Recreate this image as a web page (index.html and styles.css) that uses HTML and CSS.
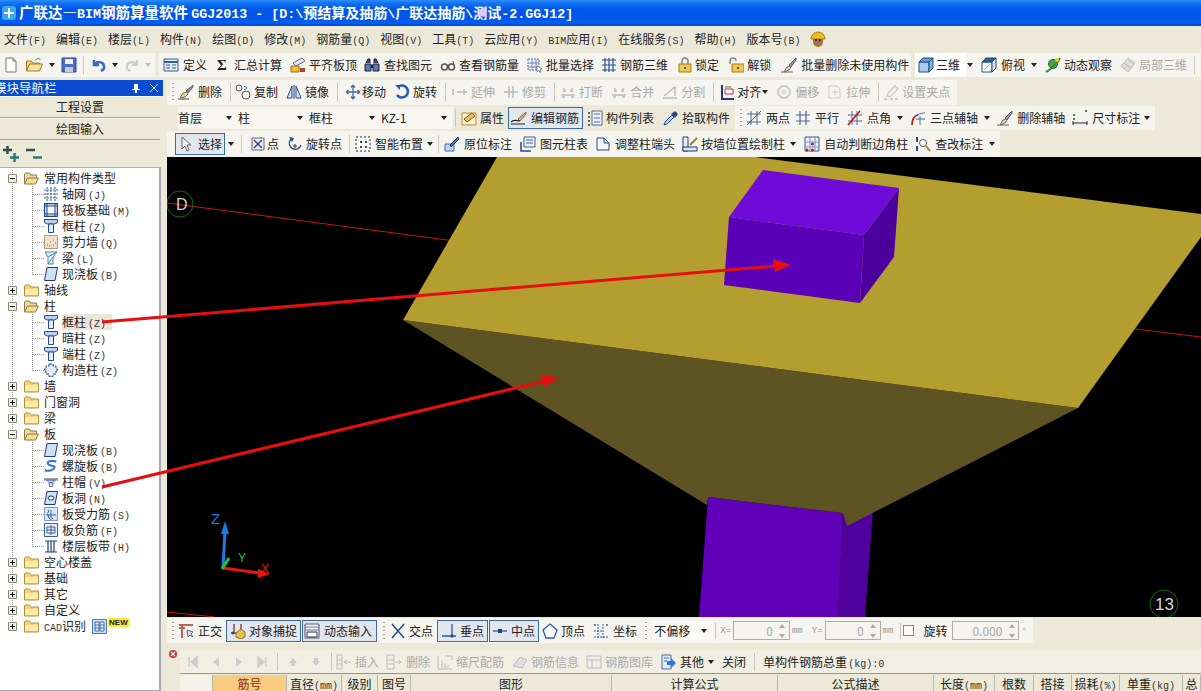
FILE: index.html
```html
<!DOCTYPE html>
<html lang="zh">
<head>
<meta charset="utf-8">
<title>广联达—BIM钢筋算量软件 GGJ2013</title>
<link rel="stylesheet" href="styles.css">
</head>
<body>
<svg class="defs" aria-hidden="true">
  <symbol id="doc" viewBox="0 0 16 16"><path d="M3 1h7l3 3v11H3z" fill="#fff" stroke="#777"/><path d="M10 1v3h3" fill="#ddd" stroke="#777"/></symbol>
  <symbol id="open" viewBox="0 0 18 16"><path d="M1 14V4h5l1 2h7v2" fill="#f3d27a" stroke="#a07a20"/><path d="M1 14l3-7h13l-3 7z" fill="#f7e3a0" stroke="#a07a20"/><path d="M10 3l3-2 2 2" fill="none" stroke="#3a9a3a"/></symbol>
  <symbol id="save" viewBox="0 0 16 16"><path d="M1 1h14v14H1z" fill="#4a6fc0" stroke="#2a4a90"/><path d="M4 2h8v5H4z" fill="#eef"/><path d="M4 10h8v5H4z" fill="#c8c8d0"/></symbol>
  <symbol id="undo" viewBox="0 0 16 16"><path d="M3 3v5h5M3.500 8C6 4 12 4 13 9c.5 2-1 4-3 5" fill="none" stroke="#3a66c8" stroke-width="2.500"/></symbol>
  <symbol id="redo" viewBox="0 0 16 16"><path d="M13 3v5H8M12.500 8C10 4 4 4 3 9c-.5 2 1 4 3 5" fill="none" stroke="#ccc" stroke-width="2.200"/></symbol>
  <symbol id="def" viewBox="0 0 16 16"><path d="M1 2h14v12H1z" fill="#e4ebf6" stroke="#3c5a90"/><path d="M1 5h14" stroke="#3c5a90" stroke-width="2"/><path d="M3 8h4M3 11h4M9 8h4M9 11h4" stroke="#3c5a90"/></symbol>
  <symbol id="align" viewBox="0 0 16 16"><path d="M3 6l9-5 3 3-9 5z" fill="#dfe6f0" stroke="#667"/><path d="M1 9h8v6H1z" fill="#f2c230" stroke="#96702a"/><path d="M10 11h5v4h-5z" fill="#a84a20"/></symbol>
  <symbol id="bino" viewBox="0 0 16 16"><path d="M2 6l2-4h2v4M14 6l-2-4h-2v4" fill="#446" stroke="#224"/><path d="M1 7h6v7H1zM9 7h6v7H9z" fill="#5a7ab0" stroke="#224"/><path d="M7 8h2v3H7z" fill="#224"/></symbol>
  <symbol id="glass" viewBox="0 0 16 16"><circle cx="4.500" cy="10" r="3" fill="none" stroke="#555" stroke-width="1.500"/><circle cx="11.500" cy="10" r="3" fill="none" stroke="#555" stroke-width="1.500"/><path d="M7 9h2M14 9l-1-5" stroke="#555"/></symbol>
  <symbol id="batch" viewBox="0 0 16 16"><path d="M1 2h11v11H1z" fill="none" stroke="#5a7ab0" stroke-dasharray="2 1"/><path d="M1 6h11M1 10h11M5 2v11M9 2v11" stroke="#6a8ac0"/><path d="M10 9l5 3-2 1 1 2-1 .5-1-2-2 1z" fill="#fff" stroke="#444" stroke-width=".6"/></symbol>
  <symbol id="grid3" viewBox="0 0 16 16"><path d="M1 3h14M1 8h14M1 13h14M4 1v14M8 1v14M12 1v14" stroke="#2c4f98" stroke-width="1.200"/></symbol>
  <symbol id="lock" viewBox="0 0 16 16"><path d="M5 7V4a3 3 0 0 1 6 0v3" fill="none" stroke="#888" stroke-width="1.500"/><path d="M2 7h12v8H2z" fill="#f0c850" stroke="#a07c20"/><path d="M8 10v2" stroke="#644" stroke-width="2"/></symbol>
  <symbol id="unlock" viewBox="0 0 16 16"><path d="M2 7V4a3 3 0 0 1 6 0" fill="none" stroke="#888" stroke-width="1.500"/><path d="M4 7h12v8H4z" fill="#f0c850" stroke="#a07c20"/><path d="M10 10v2" stroke="#644" stroke-width="2"/></symbol>
  <symbol id="brush" viewBox="0 0 16 16"><path d="M15 1L8 8l2 2 5-7z" fill="#8a9ad0" stroke="#556"/><path d="M9 9l-3 1-3 5 5-2 2-3z" fill="#dcd0a8" stroke="#776"/><path d="M0 15h12" stroke="#666"/></symbol>
  <symbol id="cube" viewBox="0 0 16 16"><path d="M1 5h10v10H1z" fill="#a8cdf0" stroke="#1f4f80"/><path d="M1 5l4-4h10l-4 4z" fill="#6f9fd0" stroke="#1f4f80"/><path d="M11 5l4-4v10l-4 4z" fill="#7fb0de" stroke="#1f4f80"/></symbol>
  <symbol id="cube2" viewBox="0 0 16 16"><path d="M1 5h10v10H1z" fill="#fff" stroke="#1f4f80"/><path d="M1 5l4-4h10l-4 4z" fill="#2f5f90" stroke="#1f4f80"/><path d="M11 5l4-4v10l-4 4z" fill="#d8e6f4" stroke="#1f4f80"/><path d="M3 13l6-6" stroke="#9ac"/></symbol>
  <symbol id="orbit" viewBox="0 0 16 16"><circle cx="8" cy="7" r="4.500" fill="#4aa04a" stroke="#2a6a2a"/><path d="M1 15C5 13 12 7 15 1" fill="none" stroke="#3a8a3a" stroke-width="2"/><circle cx="12" cy="3" r="2" fill="#e6d020"/></symbol>
  <symbol id="local3" viewBox="0 0 16 16"><path d="M8 1l7 5-7 9-7-6z" fill="#ddd" stroke="#bbb"/><path d="M4 6l7 5M8 3l5 4" stroke="#bbb"/></symbol>
  <symbol id="del" viewBox="0 0 16 16"><path d="M15 1L8 7l2 2 5-6z" fill="#9878c0" stroke="#665"/><path d="M9 8L5 9l-3 5 5-1 3-3z" fill="#e4d4a0" stroke="#775"/><path d="M0 15h11" stroke="#444"/></symbol>
  <symbol id="copy" viewBox="0 0 16 16"><circle cx="4" cy="4" r="3" fill="none" stroke="#556"/><circle cx="11" cy="11" r="4" fill="none" stroke="#556"/><path d="M9 2l3 2-3 2" fill="none" stroke="#3a7ac0"/></symbol>
  <symbol id="mirror" viewBox="0 0 16 16"><path d="M6 2v12H1zM10 2v12h5z" fill="#dde6f2" stroke="#2a4a80"/><path d="M8 1v14" stroke="#2a4a80"/></symbol>
  <symbol id="move" viewBox="0 0 16 16"><path d="M8 1v14M1 8h14M8 1L6 3.500M8 1l2 2.500M8 15l-2-2.500M8 15l2-2.500M1 8l2.500-2M1 8l2.500 2M15 8l-2.500-2M15 8l-2.500 2" fill="none" stroke="#4a6aa0" stroke-width="1.300"/></symbol>
  <symbol id="rot" viewBox="0 0 16 16"><path d="M4 3A6 6 0 1 1 3 11" fill="none" stroke="#2a5ab0" stroke-width="2.500"/><path d="M1 1h5v5z" fill="#2a5ab0"/></symbol>
  <symbol id="dim1" viewBox="0 0 16 16"><path d="M1 5v6M5 8h10M12 5v6" stroke="#bbb" stroke-width="1.500"/></symbol>
  <symbol id="dim2" viewBox="0 0 16 16"><path d="M6 2v12M10 2v12M1 8h14" stroke="#bbb" stroke-width="1.500"/></symbol>
  <symbol id="dim3" viewBox="0 0 16 16"><path d="M1 11h14M3 7h3M10 7h3M4 4v3M12 4v3M2 13h3M11 13h3" stroke="#bbb" stroke-width="1.500"/></symbol>
  <symbol id="dim4" viewBox="0 0 16 16"><path d="M1 14h14M2 12L13 3M13 3v9" fill="none" stroke="#bbb" stroke-width="1.300"/><path d="M10 4l3-2 1 3z" fill="#bbb"/></symbol>
  <symbol id="ali" viewBox="0 0 16 16"><path d="M2 1v14h12" fill="none" stroke="#1f3a80" stroke-width="2"/><path d="M5 5h8v5H5z" fill="#fff" stroke="#c03030"/><path d="M5 3h6" stroke="#209030"/></symbol>
  <symbol id="offs" viewBox="0 0 16 16"><circle cx="8" cy="8" r="6" fill="none" stroke="#ccc" stroke-width="2"/><circle cx="8" cy="8" r="2.500" fill="#ddd"/></symbol>
  <symbol id="strt" viewBox="0 0 16 16"><path d="M2 2h8l3 3v9H2z" fill="none" stroke="#ccc"/><path d="M5 8h6M8 5v6" stroke="#ccc"/></symbol>
  <symbol id="grip" viewBox="0 0 16 16"><path d="M12 2l3 3-8 8-3-1 1-3z" fill="none" stroke="#ccc" stroke-width="1.400"/><path d="M1 15h3M7 15h3M12 15h3" stroke="#bbb" stroke-width="1.400"/></symbol>
  <symbol id="prop" viewBox="0 0 16 16"><path d="M1 3h14v12H1z" fill="#fbefd8" stroke="#c08a40"/><path d="M3 9l8-6 3 3-8 6z" fill="#e8c060" stroke="#906020"/></symbol>
  <symbol id="edit" viewBox="0 0 16 16"><path d="M15 2L7 9l2 2 6-7z" fill="#d8b060" stroke="#775"/><path d="M0 12c4-3 6-1 9-1M0 14h14" fill="none" stroke="#222" stroke-width="1.200"/></symbol>
  <symbol id="list" viewBox="0 0 16 16"><path d="M5 1h10v14H5z" fill="#eef2fa" stroke="#556a90"/><path d="M7 4h6M7 8h6M7 12h6" stroke="#556a90"/><path d="M1 3h2M1 7h2M1 11h2M1 15h2" stroke="#333" stroke-width="1.500"/></symbol>
  <symbol id="pick" viewBox="0 0 16 16"><path d="M1 15l1-3 7-7 2 2-7 7z" fill="#bcd4f4" stroke="#2a4a90"/><path d="M8 4l4-3 3 3-3 4z" fill="#2a4a90"/></symbol>
  <symbol id="p2" viewBox="0 0 16 16"><path d="M1 4h14M1 12h14M5 1v14M11 1v14" stroke="#4a6aa0"/><path d="M1 15L15 1" stroke="#c03030"/></symbol>
  <symbol id="par" viewBox="0 0 16 16"><path d="M1 5h14M1 11h14M5 1v14M11 1v14" stroke="#4a6aa0" stroke-width="1.200"/></symbol>
  <symbol id="ang" viewBox="0 0 16 16"><path d="M1 5h14M1 11h14M5 1v14M10 1v14" stroke="#4a6aa0"/><path d="M1 15L13 1" stroke="#c81010" stroke-width="1.500"/></symbol>
  <symbol id="arc3" viewBox="0 0 16 16"><path d="M2 15C2 7 7 3 15 3M6 9h9M10 6v9" fill="none" stroke="#4a6aa0"/><path d="M2 15C2 9 4 6 8 5" fill="none" stroke="#c81010" stroke-width="1.500"/></symbol>
  <symbol id="size" viewBox="0 0 16 16"><path d="M1 11v4M15 11v4M1 13h14" stroke="#222"/><path d="M1 5h2M1 9h2M13 1h2" stroke="#2a9a2a" stroke-width="2"/></symbol>
  <symbol id="cur" viewBox="0 0 16 16"><path d="M1 1v12l3-3 2 5 2-1-2-5h4z" fill="#f4f4f4" stroke="#666"/></symbol>
  <symbol id="pt" viewBox="0 0 16 16"><path d="M2 2h12v12H2z" fill="#eef" stroke="#667"/><path d="M4 4l8 8M12 4l-8 8" stroke="#2a3a70" stroke-width="1.300"/></symbol>
  <symbol id="rotp" viewBox="0 0 16 16"><path d="M4 3A6 6 0 1 0 14 9" fill="none" stroke="#2a4a80" stroke-width="1.300"/><path d="M2 1l5 1-2 4z" fill="#2a4a80"/><path d="M8 8v4M6 10h4" stroke="#333"/></symbol>
  <symbol id="smart" viewBox="0 0 16 16"><path d="M1 1h14v14H1z" fill="#fff" stroke="#222" stroke-dasharray="2 2"/><path d="M5 5h2v2H5zM10 5h2v2h-2zM5 10h2v2H5zM10 10h2v2h-2z" fill="#2a4a80"/></symbol>
  <symbol id="orig" viewBox="0 0 16 16"><path d="M1 8h9v7H1z" fill="#c4d4ee" stroke="#4a6aa0"/><path d="M14 1L6 9l1 2 8-8z" fill="#3a6ac0" stroke="#1f3a80"/></symbol>
  <symbol id="ctbl" viewBox="0 0 16 16"><path d="M4 1h11v10H4z" fill="#eef2fa" stroke="#3a5a90"/><path d="M6 4h7M6 7h7" stroke="#3a5a90"/><path d="M1 6v9h10" fill="none" stroke="#2a4a90" stroke-width="1.500"/></symbol>
  <symbol id="end" viewBox="0 0 16 16"><path d="M2 2h7l5 5v7H2z" fill="#f2f4fa" stroke="#2a4a80"/><path d="M9 2v5h5" fill="none" stroke="#2a4a80"/></symbol>
  <symbol id="wall" viewBox="0 0 16 16"><path d="M1 1h5v14H1z" fill="#e8f0fa" stroke="#1f3a80"/><path d="M1 11h14v4H1z" fill="#dbe5f4" stroke="#1f3a80"/><path d="M8 9l7-7" stroke="#a08030" stroke-width="2"/></symbol>
  <symbol id="corner" viewBox="0 0 16 16"><path d="M1 1h14v14H1z" fill="#eaf0fa" stroke="#3a5a90"/><path d="M1 6h14M1 11h14M6 1v14M11 1v14" stroke="#7a94c0"/><circle cx="8.500" cy="8" r="1.500" fill="#c01818"/><circle cx="3" cy="14" r="1.500" fill="#c01818"/><circle cx="8.500" cy="14" r="1.500" fill="#c01818"/></symbol>
  <symbol id="chg" viewBox="0 0 16 16"><path d="M2 1v5M2 10v5" stroke="#2a4a90" stroke-width="2"/><circle cx="8" cy="7" r="3.500" fill="#fff" stroke="#555"/><path d="M11 10l4 5" stroke="#a88030" stroke-width="2"/></symbol>
  <symbol id="ortho" viewBox="0 0 16 16"><path d="M1 2h14M4 2v13M1 5h6" stroke="#c06050" stroke-width="2"/><path d="M9 7l1 7 2-2 3 2-2-3 2-2z" fill="#ddd" stroke="#667"/></symbol>
  <symbol id="osnap" viewBox="0 0 16 16"><path d="M1 10h7M4 1v8M11 1v6" stroke="#8a3020" stroke-width="1.300"/><circle cx="3" cy="10" r="1.500" fill="#2a4a90"/><path d="M6 10l5-4 4 3v5l-4 2-5-2z" fill="#e8c050" stroke="#907020"/></symbol>
  <symbol id="dyn" viewBox="0 0 16 16"><path d="M1 1h14v14H1z" fill="#eef2fa" stroke="#556"/><path d="M1 4h14M1 7h14" stroke="#779"/><path d="M3 9h10v5H3z" fill="#fff" stroke="#335"/></symbol>
  <symbol id="cross" viewBox="0 0 16 16"><path d="M2 1l12 14M14 1L2 15" stroke="#2a4a90" stroke-width="1.500"/></symbol>
  <symbol id="perp" viewBox="0 0 16 16"><path d="M11 1v11M1 13h14" stroke="#2a5ab0" stroke-width="1.300"/><circle cx="11" cy="13" r="1.500" fill="#1f3a80"/></symbol>
  <symbol id="midp" viewBox="0 0 16 16"><path d="M1 8h14" stroke="#2a5ab0" stroke-width="1.300"/><path d="M6 6h4v4H6z" fill="#1f3a80"/></symbol>
  <symbol id="vert" viewBox="0 0 16 16"><path d="M8 1l7 6-3 8H4L1 7z" fill="#fff" stroke="#2a5ab0" stroke-width="1.300"/></symbol>
  <symbol id="coord" viewBox="0 0 16 16"><path d="M1 8h9M5 1v14M10 1v14M1 14h14" stroke="#2a5ab0" stroke-dasharray="2 1"/><circle cx="2" cy="2" r="1" fill="#2a7a2a"/><circle cx="14" cy="2" r="1" fill="#2a7a2a"/></symbol>
  <symbol id="close" viewBox="0 0 8 8"><circle cx="4" cy="4" r="4" fill="#cc3030"/><path d="M2 2l4 4M6 2L2 6" stroke="#fff" stroke-width="1.300"/></symbol>
  <symbol id="first" viewBox="0 0 12 12"><path d="M2 1v10M10 1v10L4 6z" fill="#ccc" stroke="#ccc" stroke-width="1.500"/></symbol>
  <symbol id="prev" viewBox="0 0 12 12"><path d="M9 1v10L3 6z" fill="#ccc"/></symbol>
  <symbol id="next" viewBox="0 0 12 12"><path d="M3 1v10l6-5z" fill="#ccc"/></symbol>
  <symbol id="last" viewBox="0 0 12 12"><path d="M10 1v10M2 1v10l6-5z" fill="#ccc" stroke="#ccc" stroke-width="1.500"/></symbol>
  <symbol id="up" viewBox="0 0 12 12"><path d="M6 2l4 5H8v3H4V7H2z" fill="#ccc"/></symbol>
  <symbol id="down" viewBox="0 0 12 12"><path d="M6 10l4-5H8V2H4v3H2z" fill="#ccc"/></symbol>
  <symbol id="ins" viewBox="0 0 16 16"><path d="M1 1h5v14H1zM1 6h5M1 10h5M15 8H8M11 6L8 8l3 2" fill="none" stroke="#bbb"/></symbol>
  <symbol id="rem" viewBox="0 0 16 16"><path d="M1 1h7v14H1zM1 6h7M1 10h7M10 8h5M13 6l2 2-2 2" fill="none" stroke="#bbb"/></symbol>
  <symbol id="scale" viewBox="0 0 16 16"><path d="M1 2v13h14M5 14V7M8 14V9M11 14v-3M8 2h7v4" fill="none" stroke="#bbb"/></symbol>
  <symbol id="info" viewBox="0 0 16 16"><path d="M1 12L8 3l7 3-5 8z" fill="#ddd" stroke="#bbb"/></symbol>
  <symbol id="lib" viewBox="0 0 16 16"><path d="M1 2h14v12H1zM1 6h14M6 6v8" fill="#eee" stroke="#bbb"/></symbol>
  <symbol id="other" viewBox="0 0 16 16"><path d="M2 1h9v14H2z" fill="#e4ecf8" stroke="#4a6aa0"/><path d="M4 4h5M4 7h3" stroke="#4a6aa0"/><path d="M7 7h4V4l5 5-5 5v-3H7z" fill="#2a7ae0"/></symbol>
  <symbol id="expand" viewBox="0 0 16 16"><path d="M0 4h9M4.500 0v8" stroke="#2f4f4f" stroke-width="2.500"/><path d="M7 11.500h9M11.500 7v9" stroke="#2a7a7a" stroke-width="2.500"/></symbol>
  <symbol id="collapse" viewBox="0 0 16 16"><path d="M0 4h9" stroke="#2f4f4f" stroke-width="2.500"/><path d="M7 11.500h9" stroke="#2a7a7a" stroke-width="2.500"/></symbol>
  <symbol id="plus" viewBox="0 0 9 9"><path d="M.5.500h8v8h-8z" fill="#f6f4ec" stroke="#8a8a80"/><path d="M2 4.500h5M4.500 2v5" stroke="#111"/></symbol>
  <symbol id="minus" viewBox="0 0 9 9"><path d="M.5.500h8v8h-8z" fill="#f6f4ec" stroke="#8a8a80"/><path d="M2 4.500h5" stroke="#111"/></symbol>
  <symbol id="fc" viewBox="0 0 15 13"><path d="M.5 12V2l1-1h4l1 2h8v9z" fill="#f6d57a" stroke="#b09040"/><path d="M1 5h13v6H1z" fill="#fbe9a8"/></symbol>
  <symbol id="fo" viewBox="0 0 15 13"><path d="M.5 12V2l1-1h4l1 2h6v3" fill="#e6d8a8" stroke="#907a40"/><path d="M.5 12l3-6h11l-3 6z" fill="#f4dc8c" stroke="#907a40"/></symbol>
  <symbol id="col" viewBox="0 0 14 14"><path d="M.5.500h13v3l-3 1.500h-7L.5 3.500z" fill="#bcd0f0" stroke="#2a4a90"/><path d="M4.500 5h5v8.500h-5z" fill="#dfe9f8" stroke="#2a4a90"/></symbol>
  <symbol id="ax" viewBox="0 0 14 14"><path d="M0 3h14M0 7h14M0 11h14M3 0v14M7 0v14M11 0v14" stroke="#3a62b0" stroke-width="1.100" stroke-dasharray="2 1"/></symbol>
  <symbol id="raft" viewBox="0 0 14 14"><path d="M.5.500h13v13H.5z" fill="#dfe8f6" stroke="#1f4a90" stroke-width="1.300"/><path d="M3 3h8v8H3zM0 3h3M11 3h3M0 11h3M11 11h3M3 0v3M11 0v3M3 11v3M11 11v3" fill="#f4f6fb" stroke="#1f4a90"/></symbol>
  <symbol id="shear" viewBox="0 0 14 14"><path d="M.5.500h13v13H.5z" fill="#f0e0cc" stroke="#b09878"/><path d="M3 10h1M6 7h1M9 10h1M5 11h1M9 5h1M11 8h1" stroke="#8a6040"/></symbol>
  <symbol id="beam" viewBox="0 0 14 14"><path d="M1 1h12L9 6v7H4V6z" fill="#eaf2fb" stroke="#4a84b8"/><path d="M4 6l9-5M4 13l5-7" stroke="#4a84b8"/></symbol>
  <symbol id="slab" viewBox="0 0 14 14"><path d="M3 .5h10.500L11 13.500H.5z" fill="#cfe0f6" stroke="#1f3a80"/></symbol>
  <symbol id="gz" viewBox="0 0 14 14"><path d="M5 1h4v2h3v3h1.500v2H12v3H9v2.500H5V11H2V8H.5V6H2V3h3z" fill="#e4ecf8" stroke="#2a4a80" stroke-dasharray="3 1"/></symbol>
  <symbol id="spiral" viewBox="0 0 16 14"><path d="M14 2C8 0 2 2 5 5s8 1 7 4-7 4-11 3" fill="none" stroke="#3a7ac8" stroke-width="2.500"/></symbol>
  <symbol id="cap" viewBox="0 0 16 14"><path d="M0 3h16v2H0z" fill="#9a9a9a" stroke="#666" stroke-width=".5"/><path d="M3 5h10l-3 3H6z" fill="#c8d4e8" stroke="#2a4a90" stroke-width=".7"/><path d="M6 8h4v4H6z" fill="#fff" stroke="#2a4a90"/></symbol>
  <symbol id="hole" viewBox="0 0 14 14"><path d="M3 .5h10.500L11 13.500H.5z" fill="#cfe0f6" stroke="#1f3a80"/><ellipse cx="7" cy="7" rx="3" ry="2" fill="#fff" stroke="#1f3a80"/></symbol>
  <symbol id="sbar" viewBox="0 0 14 14"><path d="M.5.500h13v13H.5z" fill="#dbe6f6" stroke="#7a98c8"/><path d="M2 8h10M7 3v8" stroke="#3a62a0"/><path d="M5 3a3 5 0 1 0 4 8" fill="none" stroke="#3a62a0"/></symbol>
  <symbol id="nbar" viewBox="0 0 14 14"><path d="M.5.500h13v13H.5z" fill="#e6eefa" stroke="#3a62a0"/><path d="M3 4h8v6H3zM3 7h8M7 2v10" fill="none" stroke="#3a62a0"/></symbol>
  <symbol id="band" viewBox="0 0 14 14"><path d="M1 2h12M1 13h12M4 2v11M7 2v11M10 2v11" stroke="#1f3a80" stroke-width="1.200"/></symbol>
  <symbol id="cad" viewBox="0 0 15 15"><path d="M.5.500h14v14H.5z" fill="#cfe2f8" stroke="#4a7ab0"/><path d="M3 3h4v9H3zM8 3h4v9H8zM3 6h4M8 6h4M3 9h4M8 9h4" fill="#eaf3fc" stroke="#3a68a8"/></symbol>
</svg>

<div class="app">
  <header class="title">
    <svg class="logo" viewBox="0 0 14 14"><rect width="14" height="14" rx="3" fill="#3ba8e8"/><path d="M7 2v10M2 7h10" stroke="#fff" stroke-width="2"/></svg>
    <span class="title-text">广联达—<span class="lat">BIM</span>钢筋算量软件 <span class="lat">GGJ2013 - [D:\</span><span class="tail">预结算及抽筋<span class="lat">\</span>广联达抽筋<span class="lat">\</span>测试<span class="lat">-2.GGJ12]</span></span></span>
  </header>

  <nav class="menu">
    <span>文件<b>(F)</b></span><span>编辑<b>(E)</b></span><span>楼层<b>(L)</b></span><span>构件<b>(N)</b></span><span>绘图<b>(D)</b></span><span>修改<b>(M)</b></span><span>钢筋量<b>(Q)</b></span><span>视图<b>(V)</b></span><span>工具<b>(T)</b></span><span>云应用<b>(Y)</b></span><span><b>BIM</b>应用<b>(I)</b></span><span>在线服务<b>(S)</b></span><span>帮助<b>(H)</b></span><span>版本号<b>(B)</b></span>
    <svg class="hat" viewBox="0 0 16 16"><path d="M1 8a7 7 0 0 1 14 0z" fill="#f0c020" stroke="#a07a10"/><path d="M3 8h10v3a5 5 0 0 1-10 0z" fill="#a87048"/><path d="M5 9h2M9 9h2" stroke="#222" stroke-width="1.500"/></svg>
  </nav>

  <div class="bar top-bar">
    <div class="band band-a">
      <svg class="i doc"><use href="#doc"/></svg>
      <svg class="i fold"><use href="#open"/></svg><i class="tri"></i>
      <svg class="i"><use href="#save"/></svg>
      <i class="sep"></i>
      <svg class="i"><use href="#undo"/></svg><i class="tri"></i>
      <svg class="i"><use href="#redo"/></svg><i class="tri off"></i>
    </div>
    <div class="band band-b">
      <span class="it g4 m10"><svg class="i"><use href="#def"/></svg>定义</span>
      <span class="it"><em class="sigma">Σ</em>汇总计算</span>
      <span class="it m7"><svg class="i"><use href="#align"/></svg>平齐板顶</span>
      <span class="it g4"><svg class="i"><use href="#bino"/></svg>查找图元</span>
      <span class="it"><svg class="i"><use href="#glass"/></svg>查看钢筋量</span>
      <span class="it m7"><svg class="i"><use href="#batch"/></svg>批量选择</span>
      <span class="it m9"><svg class="i"><use href="#grid3"/></svg>钢筋三维</span>
      <span class="it g2 m9"><svg class="i"><use href="#lock"/></svg>锁定</span>
      <span class="it m10"><svg class="i"><use href="#unlock"/></svg>解锁</span>
      <span class="it g4 m0"><svg class="i"><use href="#brush"/></svg>批量删除未使用构件</span>
    </div>
    <div class="band band-c">
      <span class="white"><svg class="i"><use href="#cube"/></svg>三维</span><i class="tri t-a"></i>
      <span class="it g4 m0"><svg class="i"><use href="#cube2"/></svg>俯视</span><i class="tri t-b"></i>
      <span class="it"><svg class="i"><use href="#orbit"/></svg>动态观察</span>
      <span class="it off m7"><svg class="i"><use href="#local3"/></svg>局部三维</span>
      <i class="sep"></i>
    </div>
  </div>

  <div class="main">
    <aside class="side">
      <div class="nav-head"><span>模块导航栏</span><span class="nav-btns"><svg class="pin" viewBox="0 0 10 10"><path d="M3 1h4v5h2v1H6v3H4V7H1V6h2z" fill="#fff"/></svg><svg class="x" viewBox="0 0 10 10"><path d="M1 1l8 8M9 1L1 9" stroke="#dde" /></svg></span></div>
      <button class="nav-btn">工程设置</button>
      <button class="nav-btn">绘图输入</button>
      <div class="tree-tools"><svg class="i"><use href="#expand"/></svg><svg class="i"><use href="#collapse"/></svg></div>
      <div class="tree">
        <div class="r"><svg class="ex"><use href="#minus"/></svg><svg class="fo"><use href="#fo"/></svg>常用构件类型</div>
        <div class="r c"><i class="dash"></i><svg class="ci"><use href="#ax"/></svg><span>轴网<b>(J)</b></span></div>
        <div class="r c"><i class="dash"></i><svg class="ci"><use href="#raft"/></svg><span>筏板基础<b>(M)</b></span></div>
        <div class="r c"><i class="dash"></i><svg class="ci"><use href="#col"/></svg><span>框柱<b>(Z)</b></span></div>
        <div class="r c"><i class="dash"></i><svg class="ci"><use href="#shear"/></svg><span>剪力墙<b>(Q)</b></span></div>
        <div class="r c"><i class="dash"></i><svg class="ci"><use href="#beam"/></svg><span>梁<b>(L)</b></span></div>
        <div class="r c last"><i class="dash"></i><svg class="ci"><use href="#slab"/></svg><span>现浇板<b>(B)</b></span></div>
        <div class="r"><svg class="ex"><use href="#plus"/></svg><svg class="fo"><use href="#fc"/></svg>轴线</div>
        <div class="r"><svg class="ex"><use href="#minus"/></svg><svg class="fo"><use href="#fo"/></svg>柱</div>
        <div class="r c"><i class="dash"></i><svg class="ci"><use href="#col"/></svg><span class="sel">框柱<b>(Z)</b></span></div>
        <div class="r c"><i class="dash"></i><svg class="ci"><use href="#col"/></svg><span>暗柱<b>(Z)</b></span></div>
        <div class="r c"><i class="dash"></i><svg class="ci"><use href="#col"/></svg><span>端柱<b>(Z)</b></span></div>
        <div class="r c last"><i class="dash"></i><svg class="ci"><use href="#gz"/></svg><span>构造柱<b>(Z)</b></span></div>
        <div class="r"><svg class="ex"><use href="#plus"/></svg><svg class="fo"><use href="#fc"/></svg>墙</div>
        <div class="r"><svg class="ex"><use href="#plus"/></svg><svg class="fo"><use href="#fc"/></svg>门窗洞</div>
        <div class="r"><svg class="ex"><use href="#plus"/></svg><svg class="fo"><use href="#fc"/></svg>梁</div>
        <div class="r"><svg class="ex"><use href="#minus"/></svg><svg class="fo"><use href="#fo"/></svg>板</div>
        <div class="r c"><i class="dash"></i><svg class="ci"><use href="#slab"/></svg><span>现浇板<b>(B)</b></span></div>
        <div class="r c"><i class="dash"></i><svg class="ci"><use href="#spiral"/></svg><span>螺旋板<b>(B)</b></span></div>
        <div class="r c"><i class="dash"></i><svg class="ci"><use href="#cap"/></svg><span>柱帽<b>(V)</b></span></div>
        <div class="r c"><i class="dash"></i><svg class="ci"><use href="#hole"/></svg><span>板洞<b>(N)</b></span></div>
        <div class="r c"><i class="dash"></i><svg class="ci"><use href="#sbar"/></svg><span>板受力筋<b>(S)</b></span></div>
        <div class="r c"><i class="dash"></i><svg class="ci"><use href="#nbar"/></svg><span>板负筋<b>(F)</b></span></div>
        <div class="r c last"><i class="dash"></i><svg class="ci"><use href="#band"/></svg><span>楼层板带<b>(H)</b></span></div>
        <div class="r"><svg class="ex"><use href="#plus"/></svg><svg class="fo"><use href="#fc"/></svg>空心楼盖</div>
        <div class="r"><svg class="ex"><use href="#plus"/></svg><svg class="fo"><use href="#fc"/></svg>基础</div>
        <div class="r"><svg class="ex"><use href="#plus"/></svg><svg class="fo"><use href="#fc"/></svg>其它</div>
        <div class="r"><svg class="ex"><use href="#plus"/></svg><svg class="fo"><use href="#fc"/></svg>自定义</div>
        <div class="r end"><svg class="ex"><use href="#plus"/></svg><svg class="fo"><use href="#fc"/></svg><span class="cadt"><b>CAD</b>识别</span><svg class="cad"><use href="#cad"/></svg><span class="new">NEW</span></div>
      </div>
    </aside>

    <section class="work">
      <div class="row row1">
        <div class="band">
          <i class="dots"></i>
          <span class="it g4"><svg class="i"><use href="#del"/></svg>删除</span><i class="sep s4"></i>
          <span class="it"><svg class="i"><use href="#copy"/></svg>复制</span>
          <span class="it"><svg class="i"><use href="#mirror"/></svg>镜像</span><i class="sep s7"></i>
          <span class="it g1"><svg class="i"><use href="#move"/></svg>移动</span>
          <span class="it"><svg class="i"><use href="#rot"/></svg>旋转</span><i class="sep s6"></i>
          <span class="it off"><svg class="i"><use href="#dim1"/></svg>延伸</span>
          <span class="it off"><svg class="i"><use href="#dim2"/></svg>修剪</span><i class="sep s5"></i>
          <span class="it off"><svg class="i"><use href="#dim3"/></svg>打断</span>
          <span class="it off"><svg class="i"><use href="#dim3"/></svg>合并</span>
          <span class="it off"><svg class="i"><use href="#dim4"/></svg>分割</span><i class="sep s6"></i>
          <span class="it g1"><svg class="i"><use href="#ali"/></svg>对齐<i class="tri"></i></span>
          <span class="it off"><svg class="i"><use href="#offs"/></svg>偏移</span>
          <span class="it off"><svg class="i"><use href="#strt"/></svg>拉伸</span><i class="sep s4"></i>
          <span class="it off m0"><svg class="i"><use href="#grip"/></svg>设置夹点</span>
        </div>
      </div>
      <div class="row row2">
        <span class="combo w60">首层<i class="tri"></i></span>
        <span class="combo w71">柱<i class="tri"></i></span>
        <span class="combo w72">框柱<i class="tri"></i></span>
        <span class="combo w72">KZ-1<i class="tri"></i></span>
        <i class="sep s5 ml2"></i>
        <span class="it m4"><svg class="i"><use href="#prop"/></svg>属性</span>
        <span class="it act g4 m4 pe"><svg class="i"><use href="#edit"/></svg>编辑钢筋</span>
        <span class="it m9"><svg class="i"><use href="#list"/></svg>构件列表</span>
        <span class="it m5"><svg class="i"><use href="#pick"/></svg>拾取构件</span>
        <div class="band band-r">
          <i class="dots"></i>
          <span class="it g4 m5"><svg class="i"><use href="#p2"/></svg>两点</span>
          <span class="it g4"><svg class="i"><use href="#par"/></svg>平行</span>
          <span class="it g4 m7"><svg class="i"><use href="#ang"/></svg>点角<i class="tri w"></i></span>
          <span class="it g4 m7"><svg class="i"><use href="#arc3"/></svg>三点辅轴<i class="tri w"></i></span>
          <span class="it g4 m7"><svg class="i"><use href="#brush"/></svg>删除辅轴</span>
          <span class="it g4 m0"><svg class="i"><use href="#size"/></svg>尺寸标注<i class="tri"></i></span>
        </div>
      </div>
      <div class="row row3">
        <span class="it act pick"><svg class="i"><use href="#cur"/></svg>选择</span><i class="tri"></i><i class="sep s8"></i>
        <span class="it g1"><svg class="i"><use href="#pt"/></svg>点</span>
        <span class="it m7"><svg class="i"><use href="#rotp"/></svg>旋转点</span><i class="sep s5"></i>
        <span class="it g4 m5"><svg class="i"><use href="#smart"/></svg>智能布置<i class="tri"></i></span><i class="sep s5"></i>
        <span class="it g4"><svg class="i"><use href="#orig"/></svg>原位标注</span>
        <span class="it m7 g4"><svg class="i"><use href="#ctbl"/></svg>图元柱表</span>
        <span class="it m7 g4"><svg class="i"><use href="#end"/></svg>调整柱端头</span>
        <span class="it m8"><svg class="i"><use href="#wall"/></svg>按墙位置绘制柱<i class="tri w"></i></span>
        <span class="it m7 g4"><svg class="i"><use href="#corner"/></svg>自动判断边角柱</span>
        <span class="it g4 m0"><svg class="i"><use href="#chg"/></svg>查改标注<i class="tri w"></i></span>
      </div>

      <svg class="canvas" viewBox="167 157 1034 460">
        <rect x="167" y="157" width="1034" height="460" fill="#000"/>
        <path d="M167 203L470 243M1135 329L1201 337M167 612L215 617" stroke="#c81414" fill="none"/>
        <path d="M708 497L843 513L838 617H699z" fill="#6000b8"/>
        <path d="M843 513L873 510L865 617H838z" fill="#50009c"/>
        <path d="M403 320L1078 408L847 526L843 513L708 497L707 505z" fill="#5e5322"/>
        <path d="M403 320L497 157H755L1201 214V237L1078 408z" fill="#b39e2f"/>
        <path d="M763 170L899 188L864 235L729 217z" fill="#6e0bd8"/>
        <path d="M729 217L864 235L860 303L724 285z" fill="#5a00b8"/>
        <path d="M899 188L864 235L860 303L894 257z" fill="#4c009c"/>
        <circle cx="180" cy="204" r="13" fill="none" stroke="#0c6e1e"/>
        <text x="176" y="210" class="cv-d">D</text>
        <circle cx="1164" cy="604" r="14" fill="none" stroke="#0c6e1e"/>
        <text x="1155" y="610" class="cv-n">13</text>
        <path d="M223 568L225 530" stroke="#1c7ae8" stroke-width="3"/><path d="M225 521L221 534H229z" fill="#1c7ae8"/>
        <path d="M223 568L260 573" stroke="#e81414" stroke-width="3"/><path d="M270 574L258 569V578z" fill="#e81414"/>
        <path d="M222 569L229 558" stroke="#22c828" stroke-width="3"/>
        <text x="211" y="524" class="ax-z">Z</text>
        <text x="238" y="562" class="ax-y">Y</text>
        <text x="261" y="573" class="ax-x">X</text>
      </svg>

      <div class="snap">
        <div class="band snap-band">
          <i class="dots"></i>
          <span class="it g4 m4"><svg class="i"><use href="#ortho"/></svg>正交</span>
          <span class="it act m1 a1"><svg class="i"><use href="#osnap"/></svg>对象捕捉</span>
          <span class="it act g4 a2 m0"><svg class="i"><use href="#dyn"/></svg>动态输入</span>
          <i class="dots d2"></i>
          <span class="it m4"><svg class="i"><use href="#cross"/></svg>交点</span>
          <span class="it act m1 a1"><svg class="i"><use href="#perp"/></svg>垂点</span>
          <span class="it act m3 a3"><svg class="i"><use href="#midp"/></svg>中点</span>
          <span class="it"><svg class="i"><use href="#vert"/></svg>顶点</span>
          <span class="it g4 m3"><svg class="i"><use href="#coord"/></svg>坐标</span>
          <i class="dots d3"></i>
          <span class="off-combo">不偏移<i class="tri"></i></span>
          <i class="sep thin"></i>
          <span class="lab">X=</span><span class="spin w57">0<i class="arr"></i></span><span class="lab">mm</span>
          <span class="lab y">Y=</span><span class="spin w56">0<i class="arr"></i></span><span class="lab">mm</span>
          <i class="sep thin t2"></i>
          <i class="chk"></i>
          <span class="rotl">旋转</span>
          <span class="spin w67">0.000<i class="arr"></i></span><span class="lab">°</span>
        </div>
      </div>

      <div class="edit">
        <svg class="cl"><use href="#close"/></svg>
        <div class="edit-bar">
          <svg class="n"><use href="#first"/></svg><svg class="n"><use href="#prev"/></svg><svg class="n"><use href="#next"/></svg><svg class="n"><use href="#last"/></svg>
          <i class="sep s8"></i>
          <svg class="n"><use href="#up"/></svg><svg class="n"><use href="#down"/></svg>
          <i class="sep s4"></i>
          <span class="it off m7"><svg class="i"><use href="#ins"/></svg>插入</span>
          <span class="it g4 off m7"><svg class="i"><use href="#rem"/></svg>删除</span>
          <span class="it off"><svg class="i"><use href="#scale"/></svg>缩尺配筋</span>
          <span class="it off m7"><svg class="i"><use href="#info"/></svg>钢筋信息</span>
          <span class="it off m7"><svg class="i"><use href="#lib"/></svg>钢筋图库</span>
          <span class="it g4"><svg class="i"><use href="#other"/></svg>其他<i class="tri"></i></span>
          <span class="it m8">关闭</span>
          <i class="sep s8"></i>
          <span class="total">单构件钢筋总重<b>(kg):0</b></span>
        </div>
      </div>

      <div class="table">
        <span class="th blank w33"></span>
        <span class="th hot w74">筋号</span>
        <span class="th w55">直径<b>(mm)</b></span>
        <span class="th w36">级别</span>
        <span class="th w33">图号</span>
        <span class="th w201">图形</span>
        <span class="th w166">计算公式</span>
        <span class="th w156">公式描述</span>
        <span class="th w61">长度<b>(mm)</b></span>
        <span class="th w39">根数</span>
        <span class="th w38">搭接</span>
        <span class="th w48">损耗<b>(%)</b></span>
        <span class="th w63">单重<b>(kg)</b></span>
        <span class="th w18">总</span>
      </div>
    </section>
  </div>

  <svg class="arrows" viewBox="0 0 1201 691">
    <path d="M102 322L776 266" stroke="#e60f0f" stroke-width="3"/><path d="M791 265L773 259L775 272z" fill="#e60f0f"/>
    <path d="M102 487L545 381" stroke="#e60f0f" stroke-width="3"/><path d="M559 378L541 374L544 387z" fill="#e60f0f"/>
  </svg>
</div>
</body>
</html>
```
FILE: styles.css
```css
html, body { margin: 0; padding: 0; height: 691px; overflow: hidden; }
body { font: 12px/16px "Noto Sans CJK SC", "Noto Sans", sans-serif; color: #222; background: #ece9d8; }
.defs { width: 0; height: 0; display: block; overflow: hidden; }
.app { position: relative; width: 1201px; height: 691px; overflow: hidden; display: flex; flex-direction: column; }
i, em, b { font-style: normal; font-weight: normal; }
b { font: 10px/1 "Liberation Mono", monospace; color: #333; }

.title { height: 26px; flex: none; display: flex; align-items: center; padding-left: 2px; color: #fff; background: linear-gradient(#2f8cf8 0, #1274f4 12%, #0057e8 35%, #0055ea 70%, #0460f4 88%, #0345b8 100%); }
.logo { width: 14px; height: 14px; margin-right: 3px; }
.title-text { font-weight: 700; font-size: 14.500px; white-space: pre; }
.tail { font-size: 14px; }
.lat { font: 700 13.330px/16px "Liberation Mono", monospace; }

.menu { height: 26px; flex: none; display: flex; align-items: center; gap: 10px; padding-left: 4px; }
.menu span { white-space: nowrap; }
.hat { width: 16px; height: 16px; }

.bar { height: 26px; flex: none; display: flex; align-items: center; }
.band { background: #f5f4ee; height: 24px; display: flex; align-items: center; flex: none; }
.band-a { width: 155px; padding-left: 3px; box-sizing: border-box; }
.band-a .fold { width: 19px; margin-left: 6px; }
.band-a .sep { margin: 0 7px 0 6px; }
.band-a .tri { margin: 0 6px 0 5px; }
.band-b { margin-left: 4px; padding-left: 4px; width: 752px; box-sizing: border-box; }
.band-c { flex: 1; margin-left: 4px; }
.white { display: flex; align-items: center; gap: 2px; background: #fff; height: 24px; padding: 0 6px 0 3px; flex: none; white-space: nowrap; }
.tri.t-a { margin: 0 8px 0 1px; }
.tri.t-b { margin: 0 8px 0 6px; }

.i { width: 16px; height: 16px; flex: none; }
.it { display: inline-flex; align-items: center; gap: 3px; margin-right: 8px; white-space: nowrap; height: 22px; flex: none; }
.g1 { gap: 1px; } .g2 { gap: 2px; } .g4 { gap: 4px; }
.m0 { margin-right: 0; } .m1 { margin-right: 1px; } .m3 { margin-right: 3px; } .m4 { margin-right: 4px; } .m5 { margin-right: 5px; } .m7 { margin-right: 7px; } .m8 { margin-right: 8px; } .m9 { margin-right: 9px; } .m10 { margin-right: 10px; }
.off { color: #aaa; }
.sigma { width: 10px; font: 700 15px/16px "Liberation Serif", serif; text-align: center; margin-right: 4px; }
.sep { width: 1px; height: 18px; background: #c8c6b8; margin: 0 7px 0 0; flex: none; }
.s4 { margin-right: 4px; } .s5 { margin-right: 5px; } .s6 { margin-right: 6px; } .s7 { margin-right: 7px; } .s8 { margin-right: 8px; }
.ml2 { margin-left: 2px; }
.sep.thin { margin: 0 2px; height: 16px; }
.sep.t2 { margin: 0 2px 0 5px; }
.tri { width: 0; height: 0; border: 3px solid transparent; border-top: 4px solid #222; border-bottom: 0; margin: 0 4px; flex: none; }
.it .tri { margin: 0; }
.it .tri.w { margin-left: 2px; }
.tri.off { border-top-color: #bbb; }
.dots { width: 2px; height: 18px; flex: none; margin: 0 4px 0 5px; background: repeating-linear-gradient(#a8a698 0 1px, transparent 1px 4px); }
.dots.d2 { margin: 0 5px 0 6px; }
.dots.d3 { margin: 0 5px; }
.act { background: #e2e6ee; outline: 1px solid #3a6aa0; outline-offset: -1px; padding: 0 4px 0 3px; }
.a1 { padding-left: 4px; }
.a2 { padding: 0 5px 0 2px; }
.a3 { padding-left: 3px; }

.main { flex: 1; display: flex; min-height: 0; }
.side { width: 162px; margin-right: 5px; flex: none; display: flex; flex-direction: column; padding-top: 2px; }
.nav-head { height: 16px; flex: none; background: #0a4cd0; color: #fff; display: flex; justify-content: space-between; align-items: center; font-size: 12.500px; margin: 0 -1px 0 -6px; }
.nav-btns { display: flex; gap: 8px; margin-right: 4px; align-items: center; }
.pin, .x { width: 10px; height: 10px; }
.nav-btn { height: 22px; flex: none; font: inherit; color: #222; background: #ece9d8; border: 0; border-top: 1px solid #fbfaf4; border-bottom: 1px solid #a8a698; padding: 0; width: 160px; }
.tree-tools { height: 27px; flex: none; display: flex; align-items: center; gap: 7px; padding-left: 3px; width: 160px; }
.tree { flex: 1; width: 159px; background: #fff; border: 1px solid #a8b0c0; border-left: 0; border-right: 2px solid #a8a8b0; padding-top: 2px; overflow: hidden; }
.r { height: 16px; display: flex; align-items: center; padding-left: 8px; white-space: nowrap; background: repeating-linear-gradient(#999 0 1px, transparent 1px 2px) 12px 0 / 1px 100% no-repeat; }
.r b { margin-left: 2px; }
.r.c { padding-left: 33px; background: repeating-linear-gradient(#999 0 1px, transparent 1px 2px) 12px 0 / 1px 100% no-repeat, repeating-linear-gradient(#999 0 1px, transparent 1px 2px) 32px 0 / 1px 100% no-repeat; }
.r.c.last { background: repeating-linear-gradient(#999 0 1px, transparent 1px 2px) 12px 0 / 1px 100% no-repeat, repeating-linear-gradient(#999 0 1px, transparent 1px 2px) 32px 0 / 1px 9px no-repeat; }
.r.end { background: repeating-linear-gradient(#999 0 1px, transparent 1px 2px) 12px 0 / 1px 8px no-repeat; }
.dash { width: 11px; height: 0; border-top: 1px dotted #999; flex: none; }
.ex { width: 9px; height: 9px; margin-right: 7px; flex: none; }
.fo { width: 15px; height: 13px; margin-right: 5px; flex: none; }
.ci { width: 14px; height: 14px; margin-right: 4px; flex: none; }
.sel { background: #e9e5d8; padding-right: 6px; height: 16px; }
.cadt b { margin-left: 0; }
.cad { width: 15px; height: 15px; margin-left: 6px; flex: none; }
.new { font: 700 8px/9px "Liberation Sans", sans-serif; background: #f8e840; color: #222; padding: 0 1px; align-self: flex-start; margin-left: 1px; }

.work { flex: 1; min-width: 0; display: flex; flex-direction: column; padding-top: 1px; }
.row { height: 26px; flex: none; display: flex; align-items: center; }
.row1 .band { height: 25px; width: 790px; }
.row2 { padding-left: 11px; }
.band-r { padding-right: 5px; }
.pe { padding: 0 4px 0 3px; }
.combo { height: 22px; background: #f7f6f0; display: flex; align-items: center; justify-content: space-between; flex: none; box-sizing: border-box; }
.combo .tri { margin: 0 6px 0 0; }
.w60 { width: 60px; } .w71 { width: 71px; } .w72 { width: 72px; }
.row3 { padding-left: 8px; width: 825px; background: #f5f4ee; }
.pick { padding: 0 3px 0 6px; gap: 1px; margin-right: 3px; }
.pick + .tri { margin: 0 7px 0 0; }
.canvas { width: 1034px; height: 460px; flex: none; display: block; }
.cv-d { font: 16px "Liberation Sans", sans-serif; fill: #d0d0d0; }
.cv-n { font: 17px "Liberation Sans", sans-serif; fill: #d8d8d8; }
.ax-z { font: 15px "Liberation Sans", sans-serif; fill: #1c7ae8; }
.ax-y { font: 12px "Liberation Sans", sans-serif; fill: #22c828; }
.ax-x { font: 12px "Liberation Sans", sans-serif; fill: #e81414; }

.snap { height: 27px; flex: none; display: flex; align-items: center; }
.snap-band { width: 866px; height: 25px; }
.off-combo { width: 61px; height: 20px; background: #fbfaf6; display: flex; align-items: center; justify-content: space-between; flex: none; padding-left: 2px; box-sizing: border-box; }
.off-combo .tri { margin: 0 6px 0 0; }
.lab { color: #999; font: 9px/16px "Liberation Mono", monospace; margin: 0 2px; flex: none; }
.lab.y { margin-left: 7px; }
.spin { height: 19px; box-sizing: border-box; border: 1px solid #b0ae9e; color: #aaa; display: flex; align-items: center; justify-content: flex-end; gap: 6px; flex: none; padding-right: 3px; }
.w57 { width: 57px; } .w56 { width: 56px; } .w67 { width: 67px; }
.arr { width: 7px; height: 14px; display: flex; flex-direction: column; justify-content: space-between; align-items: center; }
.arr::before { content: ""; border: 3px solid transparent; border-bottom: 4px solid #aaa; border-top: 0; }
.arr::after { content: ""; border: 3px solid transparent; border-top: 4px solid #aaa; border-bottom: 0; }
.chk { width: 11px; height: 11px; box-sizing: border-box; border: 1px solid #888; background: #fbfaf6; flex: none; }
.rotl { margin: 0 5px 0 9px; flex: none; }

.edit { height: 30px; flex: none; display: flex; }
.cl { width: 8px; height: 8px; margin: 6px 0 0 2px; flex: none; }
.edit-bar { flex: 1; background: #f1efe4; margin: 6px 0 0 3px; height: 23px; display: flex; align-items: center; border-bottom: 1px solid #98968a; padding-left: 2px; }
.n { width: 12px; height: 12px; margin: 0 6px 0 5px; flex: none; }
.edit-bar .sep + .n { margin-left: 1px; }
.edit-bar .n + .sep { margin-left: 3px; }
.total { white-space: nowrap; flex: none; }
.total b { margin-left: 1px; }
.table { display: flex; flex: none; height: 17px; margin: 1px 0 0 13px; background: #ece9d8; overflow: hidden; }
.th { height: 17px; padding-top: 1px; box-sizing: border-box; text-align: center; border-right: 1px solid #b8b6a8; flex: none; white-space: nowrap; }
.blank { background: #f4f2e8; }
.hot { background: #f8cc80; color: #8a2a1a; }
.w33 { width: 33px; } .w74 { width: 74px; } .w55 { width: 55px; } .w36 { width: 36px; } .w201 { width: 201px; } .w166 { width: 166px; } .w156 { width: 156px; } .w61 { width: 61px; } .w39 { width: 39px; } .w38 { width: 38px; } .w48 { width: 48px; } .w63 { width: 63px; } .w18 { width: 18px; }

.arrows { position: absolute; left: 0; top: 0; width: 1201px; height: 691px; pointer-events: none; }
```
